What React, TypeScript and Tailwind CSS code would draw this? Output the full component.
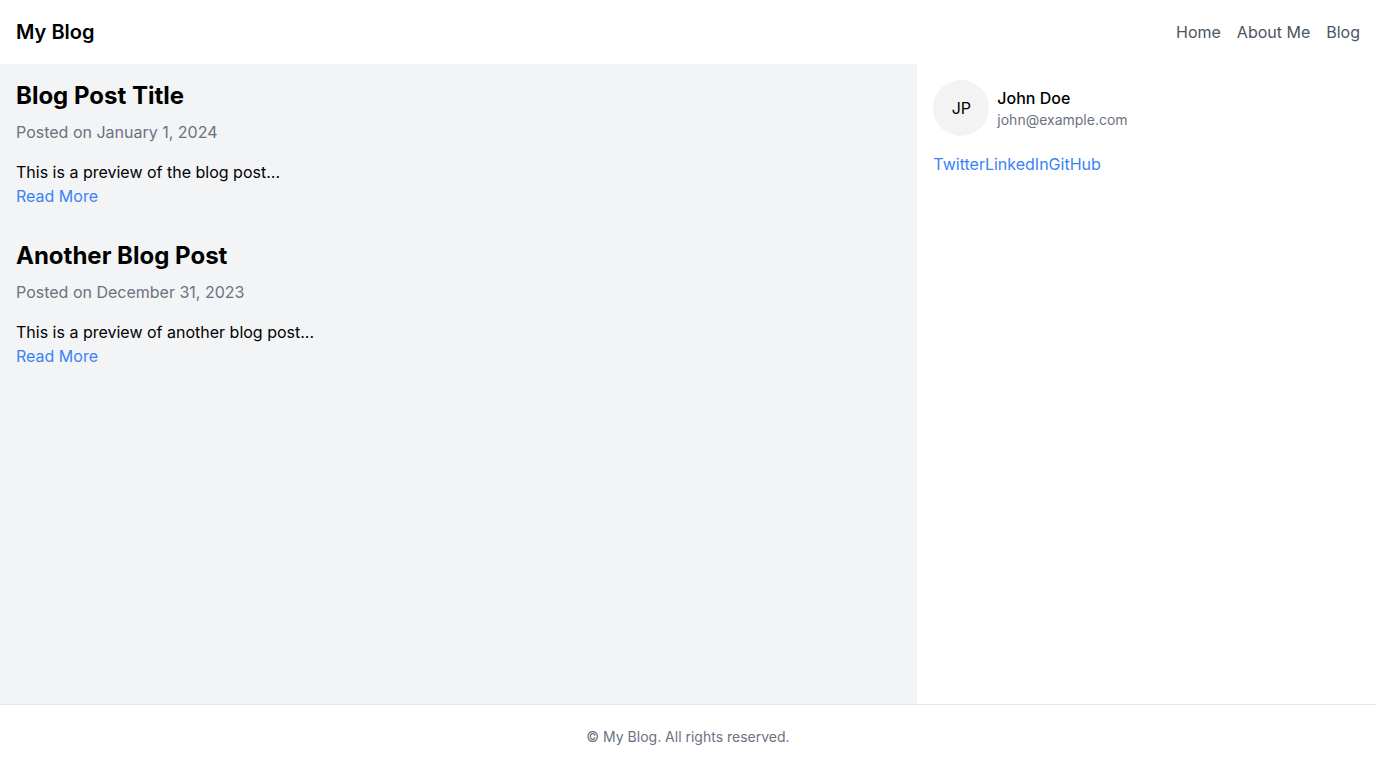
const posts = [
  {
    title: "Blog Post Title",
    date: "January 1, 2024",
    preview: "This is a preview of the blog post...",
  },
  {
    title: "Another Blog Post",
    date: "December 31, 2023",
    preview: "This is a preview of another blog post...",
  },
];

export default function App() {
  return (
    <div className="flex min-h-screen flex-col bg-white font-['Inter',sans-serif] text-black">
      {/* Header */}
      <header className="flex h-16 items-center justify-between px-4">
        <h1 className="text-xl font-semibold">My Blog</h1>
        <nav className="flex gap-4 text-base text-[#4b5563]">
          <a href="#">Home</a>
          <a href="#">About Me</a>
          <a href="#">Blog</a>
        </nav>
      </header>

      {/* Main */}
      <main className="flex flex-1">
        <div className="w-2/3 bg-[#f3f4f6] p-4">
          <div className="flex flex-col gap-8">
            {posts.map((post) => (
              <article key={post.title}>
                <h2 className="text-2xl font-bold">{post.title}</h2>
                <p className="mt-2 text-base text-[#6b7280]">Posted on {post.date}</p>
                <p className="mt-4 text-base">{post.preview}</p>
                <a href="#" className="text-base text-[#3b82f6]">
                  Read More
                </a>
              </article>
            ))}
          </div>
        </div>

        {/* Sidebar */}
        <aside className="w-1/3 p-4">
          <div className="flex items-center gap-2">
            <div className="flex h-14 w-14 items-center justify-center rounded-full bg-[#f3f3f3] text-base">
              JP
            </div>
            <div>
              <p className="text-base font-medium">John Doe</p>
              <p className="text-sm text-[#6b7280]">john@example.com</p>
            </div>
          </div>
          <div className="mt-4 flex text-base text-[#3b82f6]">
            <a href="#">Twitter</a>
            <a href="#">LinkedIn</a>
            <a href="#">GitHub</a>
          </div>
        </aside>
      </main>

      {/* Footer */}
      <footer className="flex h-16 items-center justify-center border-t border-[#e5e7eb] text-sm text-[#6b7280]">
        © My Blog. All rights reserved.
      </footer>
    </div>
  );
}
